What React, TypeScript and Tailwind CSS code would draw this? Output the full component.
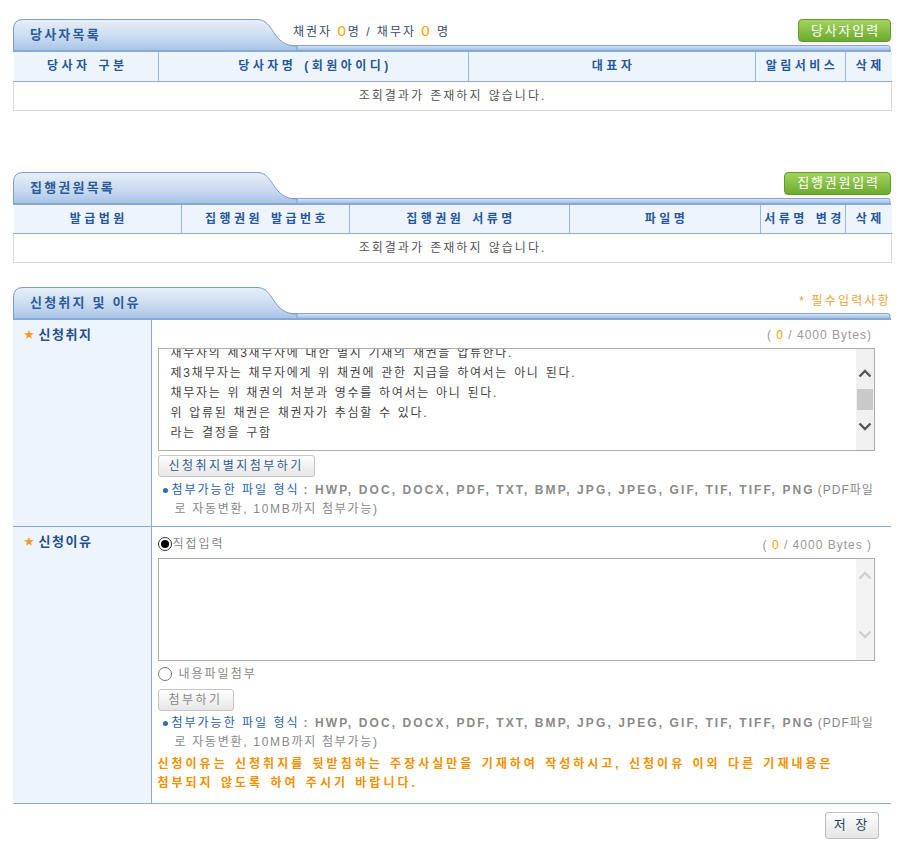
import React from "react";

const FONT = "font-['Liberation_Sans','Noto_Sans_CJK_KR',sans-serif]";

const SectionHead: React.FC<{ id: string; title: string; children?: React.ReactNode }> = ({ id, title, children }) => {
  return (
    <div className="relative h-[33px]">
      <svg className="absolute inset-0" width="878" height="33">
        <defs>
          <linearGradient id={`tab-${id}`} x1="0" y1="0" x2="0" y2="1">
            <stop offset="0" stopColor="#e8eff9" />
            <stop offset="0.55" stopColor="#c9daf0" />
            <stop offset="1" stopColor="#a3c1e6" />
          </linearGradient>
          <linearGradient id={`bar-${id}`} x1="0" y1="0" x2="0" y2="1">
            <stop offset="0" stopColor="#dbe7f6" />
            <stop offset="1" stopColor="#8fb2df" />
          </linearGradient>
        </defs>
        <rect x="268" y="26.5" width="609" height="6" rx="2" fill={`url(#bar-${id})`} stroke="#86a5d0" />
        <path d="M0.5,33 V10 Q0.5,0.5 10,0.5 H244 C262,0.5 258,27 284,27 V33 Z" fill={`url(#tab-${id})`} stroke="#7b9dca" />
        <rect x="0" y="31" width="878" height="2" fill="#86a8d6" />
      </svg>
      <div className="relative flex h-full items-start">
        <div className="w-[280px] shrink-0 pl-[17px] pt-[6px] text-[13px] font-bold tracking-[2.2px] text-[#2a5c9b]">{title}</div>
        <div className="flex flex-1 items-start justify-between">{children}</div>
      </div>
    </div>
  );
};

const GreenButton: React.FC<{ label: string; w: string }> = ({ label, w }) => (
  <button
    className={`${w} h-[23px] rounded-[4px] border border-[#5f9c2c] bg-gradient-to-b from-[#a2d35e] to-[#6cab2e] pl-[2px] text-[13px] tracking-[1.8px] text-white`}
  >
    {label}
  </button>
);

const GrayButton: React.FC<{ label: string; className?: string }> = ({ label, className }) => (
  <button
    className={`h-[22px] rounded-[3px] border border-[#c6c6c6] bg-gradient-to-b from-[#ffffff] to-[#e6e6e6] px-[10px] text-[12px] tracking-[2.5px] ${className ?? ""}`}
  >
    {label}
  </button>
);

const ListTable: React.FC<{ cols: { label: string; w: number }[] }> = ({ cols }) => (
  <table className="w-full table-fixed border-collapse">
    <colgroup>
      {cols.map((c) => (
        <col key={c.label} style={{ width: c.w }} />
      ))}
    </colgroup>
    <thead>
      <tr className="h-[29px] bg-[#eef4fc]">
        {cols.map((c, i) => (
          <th
            key={c.label}
            className={`border-b border-[#8aacdb] pl-[3px] text-[12px] font-bold tracking-[3.5px] [word-spacing:1px] text-[#24579c] ${
              i < cols.length - 1 ? "border-r" : ""
            } border-r-[#9ab7de]`}
          >
            {c.label}
          </th>
        ))}
      </tr>
    </thead>
    <tbody>
      <tr className="h-[29px]">
        <td
          colSpan={cols.length}
          className="border border-t-0 border-[#dadada] text-center text-[12px] tracking-[2px] [word-spacing:1px] text-[#555]"
        >
          조회결과가 존재하지 않습니다.
        </td>
      </tr>
    </tbody>
  </table>
);

const Chevron: React.FC<{ up?: boolean; color: string }> = ({ up, color }) => (
  <svg width="14" height="9" viewBox="0 0 14 9">
    <path d={up ? "M1.5,7.5 L7,2 L12.5,7.5" : "M1.5,1.5 L7,7 L12.5,1.5"} fill="none" stroke={color} strokeWidth="2.4" />
  </svg>
);

const Bytes: React.FC<{ tail: string }> = ({ tail }) => (
  <span className="text-[12px] tracking-[1px] text-[#999]">
    ( <span className="text-[#f5a300]">0</span> / 4000 Bytes{tail}
  </span>
);

const FileNote: React.FC = () => (
  <div className="text-[12px] leading-[19px] text-[#888]">
    <div className="flex items-center whitespace-nowrap">
      <span className="ml-[5px] mr-[4px] inline-block h-[5px] w-[5px] shrink-0 rounded-full bg-[#2d6db5]" />
      <span className="tracking-[2px] text-[#1f62ad]">첨부가능한 파일 형식</span>
      <span className="ml-[4px] font-bold tracking-[2.1px] text-[#8a8a8a]">
        : HWP, DOC, DOCX, PDF, TXT, BMP, JPG, JPEG, GIF, TIF, TIFF, PNG
      </span>
      <span className="ml-[3px] tracking-[1px]">(PDF파일</span>
    </div>
    <div className="pl-[17px] tracking-[1.7px]">로 자동변환, 10MB까지 첨부가능)</div>
  </div>
);

const Label: React.FC<{ text: string }> = ({ text }) => (
  <td className="w-[138px] border-r border-[#8aacdb] bg-[#eef4fc] align-top">
    <div className="flex items-center pl-[11px] pt-[5px] text-[13px] font-bold tracking-[1.5px] text-[#1f4f8f]">
      <span className="mr-[3px] text-[10px] text-[#f39a1e]">★</span>
      {text}
    </div>
  </td>
);

const App: React.FC = () => {
  return (
    <div className={`${FONT} h-[861px] w-[904px] bg-white pl-[13px] pt-[19px]`}>
      <div className="w-[878px]">
        {/* 당사자목록 */}
        <SectionHead id="a" title="당사자목록">
          <div className="pt-[1px] text-[12px] tracking-[2px] text-[#3b4b68]">
            채권자 <span className="text-[15px] text-[#f7a200]">0</span>명 / 채무자{" "}
            <span className="text-[15px] text-[#f7a200]">0</span> 명
          </div>
          <GreenButton label="당사자입력" w="w-[93px]" />
        </SectionHead>
        <ListTable
          cols={[
            { label: "당사자 구분", w: 145 },
            { label: "당사자명 (회원아이디)", w: 310 },
            { label: "대표자", w: 287 },
            { label: "알림서비스", w: 90 },
            { label: "삭제", w: 46 },
          ]}
        />

        {/* 집행권원목록 */}
        <div className="mt-[61px]">
          <SectionHead id="b" title="집행권원목록">
            <div />
            <GreenButton label="집행권원입력" w="w-[107px]" />
          </SectionHead>
          <ListTable
            cols={[
              { label: "발급법원", w: 168 },
              { label: "집행권원 발급번호", w: 168 },
              { label: "집행권원 서류명", w: 220 },
              { label: "파일명", w: 191 },
              { label: "서류명 변경", w: 85 },
              { label: "삭제", w: 46 },
            ]}
          />
        </div>

        {/* 신청취지 및 이유 */}
        <div className="mt-[24px]">
          <SectionHead id="c" title="신청취지 및 이유">
            <div />
            <div className="pt-[5px] text-[12px] tracking-[2.2px] text-[#eea23a]">* 필수입력사항</div>
          </SectionHead>
          <table className="w-full table-fixed border-collapse">
            <tbody>
              <tr className="border-b border-[#86a8d6]">
                <Label text="신청취지" />
                <td className="h-[206px] pl-[6px] pr-[16px] align-top">
                  <div className="flex justify-end pt-[7px] pr-[3px] leading-[16px]">
                    <Bytes tail=")" />
                  </div>
                  <div className="mt-[5px] flex h-[103px] overflow-hidden border border-[#adadad]">
                    <div className="flex-1 overflow-hidden pl-[12px] text-[12px] leading-[20px] tracking-[1.7px] [word-spacing:1px] text-[#444]">
                      <div className="-mt-[6px]">
                        <div>채무자의 제3채무자에 대한 별지 기재의 채권을 압류한다.</div>
                        <div>제3채무자는 채무자에게 위 채권에 관한 지급을 하여서는 아니 된다.</div>
                        <div>채무자는 위 채권의 처분과 영수를 하여서는 아니 된다.</div>
                        <div>위 압류된 채권은 채권자가 추심할 수 있다.</div>
                        <div>라는 결정을 구함</div>
                      </div>
                    </div>
                    <div className="flex w-[18px] flex-col items-center bg-[#f0f0f0] pt-[20px]">
                      <Chevron up color="#555" />
                      <div className="mt-[11px] h-[21px] w-[16px] bg-[#c9c9c9]" />
                      <div className="mt-[12px] flex">
                        <Chevron color="#555" />
                      </div>
                    </div>
                  </div>
                  <GrayButton label="신청취지별지첨부하기" className="mt-[4px] text-[#2e5c93]" />
                  <div className="mt-[4px]">
                    <FileNote />
                  </div>
                </td>
              </tr>
              <tr className="border-b border-[#86a8d6]">
                <Label text="신청이유" />
                <td className="h-[277px] pl-[6px] pr-[16px] align-top">
                  <div className="flex items-center justify-between pt-[9px] leading-[16px]">
                    <div className="flex items-center">
                      <span className="flex h-[14px] w-[14px] items-center justify-center rounded-full border-[1.5px] border-[#333] bg-white">
                        <span className="h-[8px] w-[8px] rounded-full bg-black" />
                      </span>
                      <span className="ml-[1px] text-[12px] tracking-[2px] text-[#888]">직접입력</span>
                    </div>
                    <span className="pr-[3px]">
                      <Bytes tail=" )" />
                    </span>
                  </div>
                  <div className="mt-[5px] flex h-[103px] border border-[#adadad]">
                    <div className="flex-1" />
                    <div className="flex w-[18px] flex-col items-center bg-[#f3f3f3] pt-[12px]">
                      <Chevron up color="#cfcfcf" />
                      <div className="mt-[50px] flex">
                        <Chevron color="#cfcfcf" />
                      </div>
                    </div>
                  </div>
                  <div className="mt-[5px] flex items-center leading-[16px]">
                    <span className="h-[14px] w-[14px] rounded-full border-[1.5px] border-[#777] bg-white" />
                    <span className="ml-[7px] text-[12px] tracking-[2px] text-[#888]">내용파일첨부</span>
                  </div>
                  <GrayButton label="첨부하기" className="mt-[7px] text-[#888]" />
                  <div className="mt-[3px]">
                    <FileNote />
                  </div>
                  <div className="mt-[3px] whitespace-nowrap text-[12px] font-bold leading-[19px] tracking-[3px] [word-spacing:1px] text-[#f39000]">
                    <div>신청이유는 신청취지를 뒷받침하는 주장사실만을 기재하여 작성하시고, 신청이유 이외 다른 기재내용은</div>
                    <div>첨부되지 않도록 하여 주시기 바랍니다.</div>
                  </div>
                </td>
              </tr>
            </tbody>
          </table>
          <div className="mt-[8px] flex justify-end pr-[12px]">
            <button className="h-[27px] w-[54px] rounded-[3px] border border-[#bcbcbc] bg-gradient-to-b from-[#ffffff] to-[#e4e4e4] text-[13px] tracking-[3px] text-[#2b3f5c]">
              저 장
            </button>
          </div>
        </div>
      </div>
    </div>
  );
};

export default App;
